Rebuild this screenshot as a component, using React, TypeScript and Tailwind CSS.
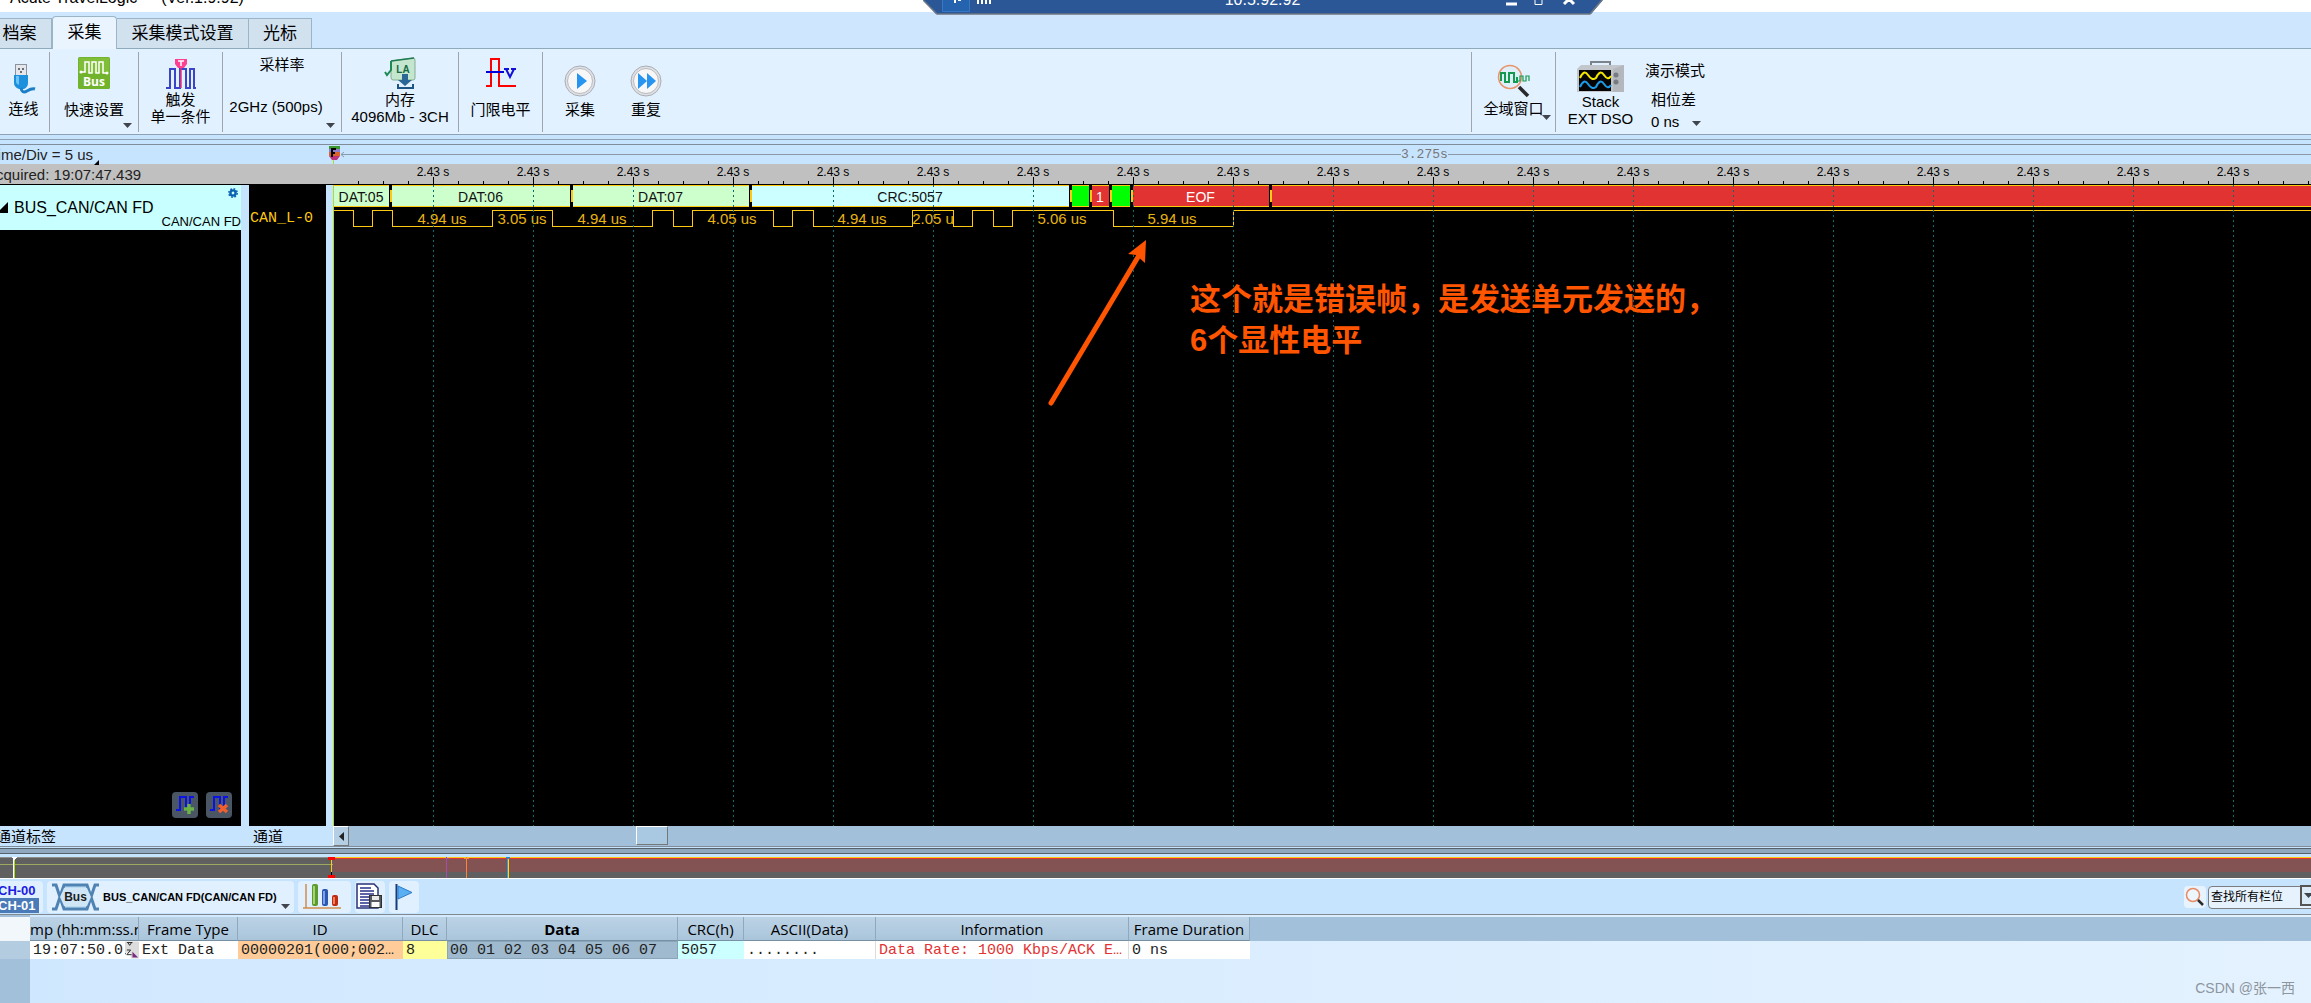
import type { ReactNode } from "react";

const MAJOR_STEP = 100;
const majors = Array.from({ length: 19 }, (_, i) => (i + 1) * MAJOR_STEP);
const minors = Array.from({ length: 79 }, (_, i) => (i + 1) * 25).filter((x) => x % MAJOR_STEP !== 0);

type Frame = { from: number; to: number; fill: string; label?: string; color?: string };

const frames: Frame[] = [
  { from: -2, to: 56, fill: "#ccffcc", label: "DAT:05" },
  { from: 56, to: 237, fill: "#ccffcc", label: "DAT:06" },
  { from: 237, to: 416, fill: "#ccffcc", label: "DAT:07" },
  { from: 416, to: 736, fill: "#ccffff", label: "CRC:5057" },
  { from: 736, to: 756, fill: "#00ff00" },
  { from: 756, to: 776, fill: "#e23333", label: "1", color: "#fff" },
  { from: 776, to: 797, fill: "#00ff00" },
  { from: 797, to: 936, fill: "#e23333", label: "EOF", color: "#fff" },
  { from: 936, to: 4000, fill: "#e23333" },
];

// x of every edge, the line starts high
const edges = [20, 39, 59, 159, 219, 319, 340, 359, 440, 459, 480, 579, 620, 639, 660, 679, 780, 900];

const pulses = [
  { x: 108, text: "4.94 us" },
  { x: 188, text: "3.05 us" },
  { x: 268, text: "4.94 us" },
  { x: 398, text: "4.05 us" },
  { x: 528, text: "4.94 us" },
  { x: 599, text: "2.05 u" },
  { x: 728, text: "5.06 us" },
  { x: 838, text: "5.94 us" },
];

const HIGH = 25;
const LOW = 41;

const wavePath =
  edges.reduce((d, x, i) => d + `H${x}V${i % 2 === 0 ? LOW : HIGH}`, `M0 ${HIGH}`) + "H4000";

function Caret({ className = "" }: { className?: string }) {
  return (
    <svg className={"pointer-events-none absolute h-[5px] w-[9px] " + className} viewBox="0 0 9 5">
      <path d="M0 0h9L4.500 5z" fill="#40444c" />
    </svg>
  );
}

/* ---------- icons ---------- */

function UsbIcon() {
  return (
    <svg width="24" height="32" viewBox="0 0 24 32">
      <rect x="3.500" y="0.500" width="11" height="11" fill="#e4e6ea" stroke="#8b93a0" />
      <path d="M6 4h2v2H6zM10 4h2v2h-2zM8 7h2v2H8z" fill="#666e7c" />
      <path d="M2 11h14v8q0 4-4 6H7q-5-2-5-6z" fill="#1c8fdd" />
      <path d="M4 12h3v9q-3-1-3-3z" fill="#6cc3f5" />
      <path d="M9 24q1 6 6 3t8-2" fill="none" stroke="#1b7fc8" strokeWidth="3" />
    </svg>
  );
}

function QuickIcon() {
  return (
    <svg width="32" height="32" viewBox="0 0 32 32">
      <rect width="32" height="32" rx="1.500" fill="#72b32d" />
      <rect x="1" y="1" width="30" height="15" fill="#8bc541" opacity=".6" />
      <path d="M3 15h4V5h4v11h3V5h4v11h3V5h4v11h4" fill="none" stroke="#fff" strokeWidth="1.500" />
      <circle cx="3" cy="15" r="1.500" fill="#fff" />
      <circle cx="29" cy="16" r="1.500" fill="#fff" />
      <text x="16" y="29" textAnchor="middle" fontSize="12" fontWeight="700" fontFamily="Open Sans, sans-serif" fill="#fff">
        Bus
      </text>
    </svg>
  );
}

function TriggerIcon() {
  return (
    <svg width="32" height="32" viewBox="0 0 32 32">
      <path d="M1 31h4V12h5v19h5V12h6v19h4V12h4v19h2" fill="none" stroke="#3a44c8" strokeWidth="2" />
      <path d="M16 9v22" stroke="#f0307c" strokeWidth="1.500" />
      <path d="M10 2h12v5l-3 4h-6l-3-4z" fill="#ff3f92" />
      <path d="M13 4h6M16 4v5" stroke="#fff" strokeWidth="1.500" />
    </svg>
  );
}

function MemoryIcon() {
  return (
    <svg width="32" height="32" viewBox="0 0 32 32">
      <path d="M7 4l22-3q2 0 2 2v18q0 2-2 2H9q-2 0-2-3z" fill="#c4e6cf" stroke="#82ae92" />
      <path d="M7 4l23-3" stroke="#1e7a4c" strokeWidth="1.500" />
      <path d="M1 15l2 3 4-5V4" fill="none" stroke="#1c8a52" strokeWidth="2" />
      <text x="19" y="16" textAnchor="middle" fontSize="10" fontWeight="700" fontFamily="Liberation Sans, sans-serif" fill="#156a45">
        LA
      </text>
      <path d="M18 17h6v6h4l-7 6-7-6h4z" fill="#2b6796" />
      <path d="M14 27v4h15v-4" fill="none" stroke="#1c5484" strokeWidth="2" />
    </svg>
  );
}

function ThresholdIcon() {
  return (
    <svg width="32" height="32" viewBox="0 0 32 32">
      <path d="M1 29h5V2h8v27h17" fill="none" stroke="#f00" strokeWidth="2" />
      <path d="M1 15h18" stroke="#0000d8" strokeWidth="2" />
      <path d="M19 12h5M26 12h5M21 12l4 8 4-8" fill="none" stroke="#1010d8" strokeWidth="2" />
    </svg>
  );
}

function RoundIcon({ children }: { children: ReactNode }) {
  return (
    <svg width="32" height="32" viewBox="0 0 32 32">
      <circle cx="16" cy="16" r="15" fill="#dfe1e5" stroke="#a9adb4" />
      <circle cx="16" cy="16" r="12.500" fill="#f7f7f8" stroke="#b7bac0" />
      <g fill="#2795f0">{children}</g>
    </svg>
  );
}

function SearchWaveIcon() {
  return (
    <svg width="34" height="34" viewBox="0 0 34 34">
      <circle cx="13" cy="13" r="11.500" fill="#dfeffa" stroke="#e8936a" strokeWidth="1.500" />
      <path d="M4 17V9h4v9h4V9h5v9h3v-5" fill="none" stroke="#129a50" strokeWidth="2" />
      <path d="M20 17h3v-5h3v5h3v-5h3v5" fill="none" stroke="#129a50" strokeWidth="1.200" />
      <path d="M22 23l9 9" stroke="#26282c" strokeWidth="3.500" />
    </svg>
  );
}

function ScopeIcon() {
  return (
    <svg width="48" height="32" viewBox="0 0 48 32">
      <path d="M14 5V1h19v4" fill="none" stroke="#7d838a" strokeWidth="2" />
      <path d="M0 8l4-4h43v27H0z" fill="#c3c6ca" />
      <path d="M36 8l11-4v27H36z" fill="#b4b7bc" />
      <rect x="2" y="9" width="32" height="21" fill="#050505" />
      <path d="M3 17q4-9 8-3t8 3q4-9 8-3t7 1" fill="none" stroke="#f4e800" strokeWidth="2" />
      <path d="M3 26q4-9 8-3t8 3q4-9 8-3t7 1" fill="none" stroke="#1d9ae8" strokeWidth="2" />
      <circle cx="39" cy="14" r="2.500" fill="#767b81" />
      <circle cx="39" cy="21" r="2.500" fill="#767b81" />
    </svg>
  );
}

function GearIcon() {
  return (
    <svg width="10" height="10" viewBox="0 0 10 10">
      <circle cx="5" cy="5" r="2.600" fill="none" stroke="#0a62b0" strokeWidth="2.400" />
      <circle cx="5" cy="5" r="4.200" fill="none" stroke="#0a62b0" strokeWidth="1.500" strokeDasharray="1.700 1.600" />
    </svg>
  );
}

function ChannelIcon({ remove }: { remove?: boolean }) {
  return (
    <svg width="26" height="26" viewBox="0 0 26 26">
      <path d="M4 18h4V5h6v13h4V5h4" fill="none" stroke="#0a12e8" strokeWidth="2" />
      {remove ? (
        <path d="M13 13l8 7M21 13l-8 7" stroke="#f0602c" strokeWidth="3.500" />
      ) : (
        <path d="M17 12v10M12 17h10" stroke="#6bb344" strokeWidth="3.500" />
      )}
    </svg>
  );
}

function BusIcon() {
  return (
    <svg width="47" height="28" viewBox="0 0 47 28">
      <path d="M11 2h25l5 12-5 12H11L6 14z" fill="#bcdcf2" />
      <path d="M0 2h4l8 24h23l8-24h4M0 26h4l8-24h23l8 24h4" fill="none" stroke="#4e83b4" strokeWidth="3" />
      <path d="M12 5h23l4 9-4 9H12l-4-9z" fill="#cfe6f6" />
      <text x="23.500" y="18" textAnchor="middle" fontSize="12" fontWeight="700" fontFamily="Liberation Sans, sans-serif" fill="#1d1d1d">
        Bus
      </text>
    </svg>
  );
}

function ChartIcon() {
  return (
    <svg width="38" height="27" viewBox="0 0 38 27">
      <path d="M3 1v24H0h38" fill="none" stroke="#d08c4c" strokeWidth="1.500" />
      <rect x="9" y="1" width="6" height="22" rx="2" fill="#5b9c2c" />
      <rect x="10" y="3" width="2" height="18" fill="#a7d27c" />
      <rect x="19" y="6" width="6" height="17" rx="2" fill="#2c58b4" />
      <rect x="20" y="8" width="2" height="13" fill="#7ea4e4" />
      <rect x="29" y="12" width="6" height="11" rx="2" fill="#c02c10" />
      <rect x="30" y="14" width="2" height="7" fill="#ec8060" />
    </svg>
  );
}

function ReportIcon() {
  return (
    <svg width="26" height="27" viewBox="0 0 26 27">
      <path d="M1 1h17l4 4v20H1z" fill="#fff" stroke="#2a3277" strokeWidth="1.500" />
      <path d="M4 5h11M4 8h14M4 11h14M4 14h9M4 17h9M4 20h9M4 23h11" stroke="#27308a" strokeWidth="1.500" />
      <rect x="13.500" y="12.500" width="12" height="12" fill="#55585e" stroke="#2e3036" />
      <path d="M16 13h7v4h-7z" fill="#e8e8e8" />
      <path d="M15.500 19h8v5h-8z" fill="#fafafa" />
    </svg>
  );
}

function FlagIcon() {
  return (
    <svg width="18" height="26" viewBox="0 0 18 26">
      <path d="M1.500 0v26" stroke="#123c7c" strokeWidth="2" />
      <path d="M3 2l14 6.500L3 15z" fill="#5aaef2" stroke="#2c7cc8" />
    </svg>
  );
}

function MagnifierIcon() {
  return (
    <svg width="20" height="20" viewBox="0 0 20 20">
      <circle cx="8" cy="8" r="6.500" fill="#edf6fd" stroke="#e88a66" strokeWidth="1.500" />
      <path d="M13 13l5 5" stroke="#2b2d31" strokeWidth="2.500" />
    </svg>
  );
}

/* ---------- top ---------- */

function TitleBar() {
  return (
    <header className="relative h-3 shrink-0 bg-white">
      <div className="flex h-3 items-end gap-6 overflow-hidden pl-[10px] text-base leading-[17px] whitespace-pre">
        <span className="mb-1.5">Acute TravelLogic</span>
        <span className="mb-1.5">(Ver.1.9.92)</span>
      </div>
      <div className="absolute top-0 left-1/2 z-10 h-[15px] w-[680px] -ml-[233px]">
        <svg className="absolute inset-0" width="680" height="15" viewBox="0 0 680 15">
          <path d="M0 0h680l-12 14H13z" fill="#2b5797" />
          <path d="M0 0l14 14h653l12-14" fill="none" stroke="#6d7684" strokeWidth="1.500" />
          <path d="M19.500 0v11.500h27V0" fill="#2563ae" stroke="#3579c6" />
          <path d="M32 0v3M35 0h3M55 0v4M59 0v4M63 0v4M67 0v4" stroke="#fff" strokeWidth="2" />
          <path d="M583 4h11M641 4l8-8M651 4l-8-8" stroke="#fff" strokeWidth="3" />
          <path d="M612 0v4.500h7V0" fill="none" stroke="#fff" />
        </svg>
        <div className="relative h-3 overflow-hidden text-center">
          <span className="-mt-2 block text-base leading-4 text-white">10.5.92.92</span>
        </div>
      </div>
    </header>
  );
}

function Tabs() {
  const idle = "h-[30px] border-t border-r border-[#9ab4c8] bg-[#d2e1ee]";
  return (
    <nav className="flex h-[37px] shrink-0 items-end border-b border-[#8fa9bd] bg-[#cfe6ff] text-[17px]">
      <button className={idle + " w-[52px] pr-3"}>档案</button>
      <button className="-mb-px h-[33px] w-[65px] rounded-t border border-b-0 border-[#9ab4c8] bg-[#e9f4ff]">采集</button>
      <button className={idle + " w-[132px]"}>采集模式设置</button>
      <button className={idle + " w-[63px]"}>光标</button>
    </nav>
  );
}

const group = "relative flex h-20 shrink-0 flex-col items-center border-l border-[#a0a5ab] whitespace-nowrap";

function Ribbon() {
  return (
    <section className="flex h-[86px] shrink-0 border-b border-[#8fa1b2] bg-[#e2f1ff] pt-[3px] text-[15px] leading-[17px]">
      <button className="flex h-20 w-[49px] flex-col items-center gap-1 pt-3 pr-0.5">
        <UsbIcon />
        连线
      </button>
      <button className={group + " w-[89px] gap-3 pt-[5px]"}>
        <QuickIcon />
        快速设置
        <Caret className="right-1.5 bottom-1" />
      </button>
      <button className={group + " w-[84px] gap-0.5 pt-[5px]"}>
        <TriggerIcon />
        <span>
          触发
          <br />
          单一条件
        </span>
      </button>
      <div className={group + " w-[119px] gap-[25px] pt-1"}>
        <label htmlFor="rate">采样率</label>
        <select id="rate" className="mr-3 w-[96px] appearance-none text-center">
          <option>2GHz (500ps)</option>
        </select>
        <Caret className="right-1.5 bottom-1" />
      </div>
      <button className={group + " w-[117px] gap-0.5 pt-[5px]"}>
        <MemoryIcon />
        <span>
          内存
          <br />
          4096Mb - 3CH
        </span>
      </button>
      <button className={group + " w-[84px] gap-3 pt-[5px]"}>
        <ThresholdIcon />
        门限电平
      </button>
      <div className="flex h-20 grow gap-1 border-l border-[#a0a5ab] pl-1.5">
        <button className="flex w-[62px] flex-col items-center gap-1 pt-[13px]">
          <RoundIcon>
            <path d="M13 8l10 8-10 8z" />
          </RoundIcon>
          采集
        </button>
        <button className="flex w-[62px] flex-col items-center gap-1 pt-[13px]">
          <RoundIcon>
            <path d="M8 8l9 8-9 8zM17 8l9 8-9 8z" />
          </RoundIcon>
          重复
        </button>
      </div>
      <button className={group + " w-[84px] gap-0.5 pt-3"}>
        <SearchWaveIcon />
        全域窗口
        <Caret className="right-1 bottom-3" />
      </button>
      <button className={group + " w-[90px] gap-0 pt-[9px]"}>
        <ScopeIcon />
        <span>
          Stack
          <br />
          EXT DSO
        </span>
      </button>
      <div className="flex w-[666px] shrink flex-col items-start pt-2.5">
        <button>演示模式</button>
        <label htmlFor="phase" className="mt-3 pl-1.5">
          相位差
        </label>
        <span className="relative mt-[5px] ml-1.5">
          <select id="phase" className="w-[50px] appearance-none">
            <option>0 ns</option>
          </select>
          <Caret className="right-0 bottom-1" />
        </span>
      </div>
    </section>
  );
}

/* ---------- waveform ---------- */

function TimeRow() {
  return (
    <div className="flex h-5 shrink-0 items-center border-t border-[#7f8c99] bg-[#c7e4ff] text-[15px]">
      <button className="relative h-5 w-[333px] shrink-0 overflow-hidden text-left text-[#222]">
        <span className="-ml-[11px] block leading-5">Time/Div = 5 us</span>
        <svg className="absolute bottom-0 left-[94px]" width="5" height="5" viewBox="0 0 5 5">
          <path d="M5 0v5H0z" />
        </svg>
      </button>
      <svg className="-ml-1 shrink-0" width="18" height="20" viewBox="0 0 18 20">
        <path d="M0 1h11v3H0z" fill="#3a9a30" />
        <path d="M0 4h11v3H0z" fill="#8d7cc8" />
        <path d="M0 7h11v4H0z" fill="#d9622c" />
        <path d="M0 11h11l-3 4H3z" fill="#c0307c" />
        <path d="M2 4h5M3 4v8M3 8h3" stroke="#000" strokeWidth="2" />
        <path d="M4.500 15v5" stroke="#b0dc2c" />
        <path d="M12 9.500h6M15 7l-3 2.500 3 2.500" fill="none" stroke="#8a98a8" />
      </svg>
      <div className="h-px w-[1054px] bg-[#8a98a8]" />
      <span className="font-['Liberation_Mono',monospace] text-[13px] text-[#777]">3.275s</span>
      <div className="h-px grow bg-[#8a98a8]" />
    </div>
  );
}

function Ruler() {
  return (
    <div className="flex h-[21px] shrink-0 overflow-hidden border-b border-black bg-[#c0c0c0]">
      <div className="w-[333px] shrink-0 overflow-hidden text-[15px] leading-[21px] whitespace-nowrap text-[#222]">
        <span className="-ml-[14px]">Acquired: 19:07:47.439</span>
      </div>
      <svg className="h-[21px] min-w-0 grow" shapeRendering="crispEdges">
        {majors.map((x) => (
          <g key={x}>
            <text x={x} y="12" textAnchor="middle" fontSize="12">
              2.43 s
            </text>
            <path d={`M${x + 0.5} 13v8`} stroke="#000" />
          </g>
        ))}
        {minors.map((x) => (
          <path key={x} d={`M${x + 0.5} 17v4`} stroke="#000" />
        ))}
      </svg>
    </div>
  );
}

function BusFrame({ from, to, fill, label, color = "#111" }: Frame) {
  return (
    <g>
      <rect x={from + 2} y="0" width={to - from - 3} height="22" fill="#ffc813" />
      <rect x={from + 2} y="1" width={to - from - 3} height="20" fill={fill} />
      <rect x={from} y="5" width="2" height="12" fill="#ffc813" />
      {label && (
        <text x={(from + to) / 2} y="17" textAnchor="middle" fontSize="14" fill={color}>
          {label}
        </text>
      )}
    </g>
  );
}

function Waveform() {
  return (
    <div className="relative min-w-0 grow overflow-hidden border-l border-[#b0dc2c] bg-black">
      <svg className="absolute inset-0 h-full w-full">
        <g shapeRendering="crispEdges">
          {frames.map((f) => (
            <BusFrame key={f.from} {...f} />
          ))}
          <path d={wavePath} fill="none" stroke="#ffc813" strokeWidth="1" transform="translate(-.5 .5)" />
        </g>
        {pulses.map((p) => (
          <text key={p.x} x={p.x} y="39" textAnchor="middle" fontSize="15" fill="#e8b410">
            {p.text}
          </text>
        ))}
        {majors.map((x) => (
          <line key={x} x1={x - 0.5} x2={x - 0.5} y1="0" y2="100%" stroke="#0a6c6c" strokeDasharray="2 3" />
        ))}
        <path d="M717 218L804 72" stroke="#ff5500" strokeWidth="5" strokeLinecap="round" />
        <path d="M812 55l-18 14 8 1 9 8z" fill="#ff5500" />
      </svg>
      <p className="absolute top-[94px] left-[856px] text-[31px] leading-[41px] font-bold whitespace-nowrap text-[#ff5500]">
        这个就是错误帧，是发送单元发送的，
        <br />
        6个显性电平
      </p>
    </div>
  );
}

function Channels() {
  return (
    <main className="flex min-h-0 grow bg-black">
      <div className="flex w-[241px] shrink-0 flex-col justify-between">
        <div className="relative h-[45px] bg-[#c8ffff]">
          <svg className="absolute top-[17px] left-0" width="8" height="11" viewBox="0 0 8 11">
            <path d="M8 0v11H-3z" />
          </svg>
          <button className="absolute top-[3px] right-[3px]" aria-label="设置">
            <GearIcon />
          </button>
          <div className="pt-[14px] pl-[14px] text-base leading-[18px]">BUS_CAN/CAN FD</div>
          <div className="-mt-0.5 text-right text-[13px] leading-[14px]">CAN/CAN FD</div>
        </div>
        <div className="flex justify-end gap-2 pr-[9px] pb-2">
          <button className="rounded bg-[#4a5664]" aria-label="添加通道">
            <ChannelIcon />
          </button>
          <button className="rounded bg-[#4a5664]" aria-label="删除通道">
            <ChannelIcon remove />
          </button>
        </div>
      </div>
      <div className="w-2 shrink-0 bg-[#c7e4ff]" />
      <div className="w-[77px] shrink-0 pt-[25px] pl-px font-['Liberation_Mono',monospace] text-[15px] leading-[18px] text-[#ffc813]">
        CAN_L-0
      </div>
      <div className="w-[7px] shrink-0 bg-[#c7e4ff]" />
      <Waveform />
    </main>
  );
}

function ScrollRow() {
  return (
    <div className="flex h-[21px] shrink-0 border-b border-[#7f8c99] bg-[#a2c0da] text-[15px] leading-[21px]">
      <div className="flex w-[333px] shrink-0 bg-[#c7e4ff]">
        <span className="-ml-1 w-[257px]">通道标签</span>
        <span>通道</span>
      </div>
      <button
        aria-label="向左滚动"
        className="flex h-5 w-4 items-center justify-center border border-t-white border-r-[#777] border-b-[#777] border-l-white bg-[#b4cee4]"
      >
        <svg width="5" height="9" viewBox="0 0 5 9">
          <path d="M5 0v9L0 4.500z" fill="#222" />
        </svg>
      </button>
      <div className="ml-[287px] h-[19px] w-8 border border-t-white border-r-[#777] border-b-[#777] border-l-white bg-[#a9c8e2]" />
    </div>
  );
}

function Overview() {
  return (
    <div className="shrink-0 border-b border-white bg-[#c7e4ff] pt-px">
      <div className="h-1.5 border-y border-[#56616c] bg-[#8fa8c0]" />
      <svg className="mt-[3px] block h-[21px] w-full bg-[#606060]" shapeRendering="crispEdges">
        <rect width="333" height="1" fill="#8c8c8c" />
        <rect y="7" width="333" height="1" fill="#9aa860" />
        <rect x="333" y="0" width="4000" height="1" fill="#ffc813" />
        <rect x="333" y="1" width="4000" height="1" fill="#e23333" />
        <rect x="333" y="2" width="4000" height="13" fill="#835354" />
        <path d="M13.500 0v21" stroke="#fff" />
        <path d="M14.500 0v21" stroke="#a8dc20" />
        <path d="M11 0h6l-3 3z" fill="#fff" />
        <path d="M446.500 0v21M445 1h4" stroke="#a050a8" />
        <path d="M466.500 0v21M464 1h5" stroke="#ff8438" />
        <path d="M508.500 0v21" stroke="#ffd820" />
        <path d="M507.500 0v21" stroke="#30a0c0" />
        <path d="M505 0h5l-2 3z" fill="#1090e0" />
        <path d="M331.500 3v12" stroke="#ffc813" />
        <path d="M331.500 15v4" stroke="#000" />
        <path d="M328 1.500h7M328 19.500h7" stroke="#f00" strokeWidth="3" />
      </svg>
    </div>
  );
}

/* ---------- report ---------- */

const tool = "flex h-8 shrink-0 items-center justify-center rounded-sm bg-[#e0f0ff]";

function ReportToolbar() {
  return (
    <div className="flex h-9 shrink-0 items-center gap-1 overflow-hidden border-b border-[#808890] bg-[#c7e4ff]">
      <button className="h-8 w-[43px] rounded-r-sm bg-[#e0f0ff] text-left text-[13px] leading-[15px] font-bold">
        <span className="-ml-0.5 block pt-0.5 text-[#1c1ce0]">CH-00</span>
        <span className="block w-[39px] bg-[#4a7ab8] text-white">
          <span className="-ml-0.5">CH-01</span>
        </span>
      </button>
      <div className={tool + " relative w-[247px] justify-start pl-[5px]"}>
        <BusIcon />
        <select aria-label="总线" className="ml-1 grow appearance-none pt-0.5 text-[11px] font-bold">
          <option>BUS_CAN/CAN FD(CAN/CAN FD)</option>
        </select>
        <Caret className="right-1 bottom-1" />
      </div>
      <button className={tool + " w-[53px] pr-1.5"} aria-label="统计">
        <ChartIcon />
      </button>
      <button className={tool + " w-[30px] pr-0.5"} aria-label="报告">
        <ReportIcon />
      </button>
      <button className={tool + " w-[30px]"} aria-label="书签">
        <FlagIcon />
      </button>
      <div className="ml-auto flex items-center gap-0.5">
        <button className="flex h-[22px] w-[22px] items-center justify-center rounded-sm bg-[#e8f3fd]" aria-label="查找">
          <MagnifierIcon />
        </button>
        <div className="relative -mr-1">
          <select
            aria-label="查找所有栏位"
            className="h-[23px] w-[107px] appearance-none rounded-sm border border-[#7a7d82] bg-[#e6f3ff] pl-0.5 text-xs"
          >
            <option>查找所有栏位</option>
          </select>
          <span className="pointer-events-none absolute top-px right-0 h-[21px] w-[15px] border-2 border-[#555] bg-[#dcebf8]">
            <Caret className="top-1.5 left-0.5" />
          </span>
        </div>
      </div>
    </div>
  );
}

const columns = [
  { title: "mp (hh:mm:ss.r", width: "w-[109px]" },
  { title: "Frame Type", width: "w-[99px]" },
  { title: "ID", width: "w-[165px]" },
  { title: "DLC", width: "w-[44px]" },
  { title: "Data", width: "w-[231px] font-bold" },
  { title: "CRC(h)", width: "w-[66px]" },
  { title: "ASCII(Data)", width: "w-[132px]" },
  { title: "Information", width: "w-[253px]" },
  { title: "Frame Duration", width: "w-[121px]" },
];

function Report() {
  return (
    <div className="relative h-[88px] shrink-0 overflow-hidden bg-linear-to-r from-[#d0e8ff] to-[#e4f2ff] pt-0.5">
      <div className="absolute top-0 bottom-0 left-0 w-[30px] bg-[#a2c0da]" />
      <div className="relative h-6 bg-[#a2c0da]">
        <table className="w-[1250px] table-fixed border-separate border-spacing-0">
          <thead>
            <tr className="h-6 bg-linear-to-b from-[#bcd3e6] to-[#a9c4da] font-['Open_Sans',sans-serif] text-[15px] leading-5">
              <th className="w-[30px] bg-[#f2f7fb] p-0" aria-label="行" />
              {columns.map((c) => (
                <th
                  key={c.title}
                  className={
                    "overflow-hidden border-r border-b border-r-[#90a8bc] border-b-[#7890a4] p-0 pt-px whitespace-nowrap " +
                    (c.title === "Data" ? "" : "font-normal ") +
                    c.width
                  }
                >
                  {c.title}
                </th>
              ))}
            </tr>
          </thead>
          <tbody>
            <tr className="h-[18px] bg-white font-['Liberation_Mono',monospace] text-[15px] leading-4 whitespace-nowrap text-[#222] *:overflow-hidden *:pt-0.5 *:pr-0 *:pb-0 *:pl-[3px]">
              <td className="bg-[#b4cce0]" />
              <td className="relative">
                19:07:50.0
                <svg className="absolute top-0 right-0" width="14" height="18" viewBox="0 0 15 18">
                  <path d="M0 0h15v18H6V12H0z" fill="#dcdcdc" />
                  <path d="M2 1h6M3 1l2 3 2-3M2 9h4l-4 5h5M0 13h1" fill="none" stroke="#222" />
                  <path d="M8 11l6 6H8z" fill="#7c2c80" />
                </svg>
              </td>
              <td>Ext Data</td>
              <td className="bg-[#ffcc99]">00000201(000;002…</td>
              <td className="bg-[#ffff99]">8</td>
              <td className="bg-[#9fb9ce] outline -outline-offset-1 outline-[#8aa4b8]">00 01 02 03 04 05 06 07</td>
              <td className="bg-[#ccffff]">5057</td>
              <td className="border-r border-[#ddd]">........</td>
              <td className="border-r border-[#ddd] text-[#e23333]">Data Rate: 1000 Kbps/ACK E…</td>
              <td>0 ns</td>
            </tr>
          </tbody>
        </table>
      </div>
      <span className="absolute right-4 bottom-1 text-[14px] text-[#8d959d]">CSDN @张一西</span>
    </div>
  );
}

export default function App() {
  return (
    <div className="flex h-screen flex-col overflow-hidden bg-[#c7e4ff] font-['Liberation_Sans','Noto_Sans_CJK_SC',sans-serif] text-black">
      <TitleBar />
      <Tabs />
      <Ribbon />
      <div className="h-[5px] shrink-0 border-b border-[#8fa1b2]" />
      <div className="h-1 shrink-0" />
      <TimeRow />
      <Ruler />
      <Channels />
      <ScrollRow />
      <Overview />
      <ReportToolbar />
      <Report />
    </div>
  );
}
